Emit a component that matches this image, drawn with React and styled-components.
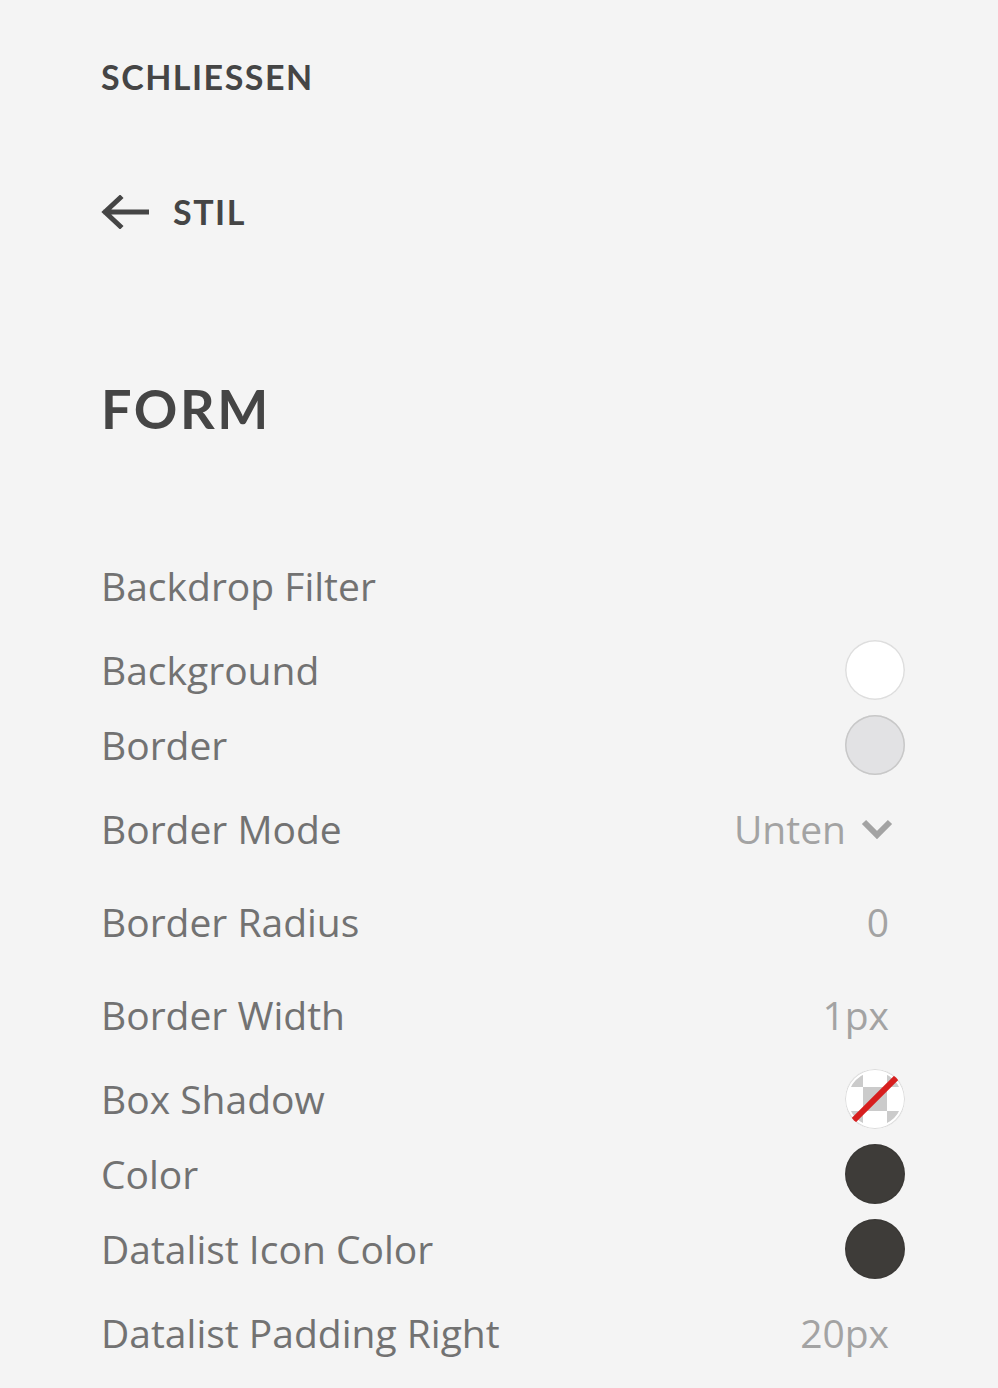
import React from "react";
import styled, { createGlobalStyle } from "styled-components";

const Global = createGlobalStyle`
  html, body { margin: 0; padding: 0; background: #f4f4f4; }
  body { font-family: "Open Sans", "Liberation Sans", sans-serif; }
  * { box-sizing: border-box; }
`;

const Panel = styled.div`
  width: 998px;
  min-height: 1388px;
  padding: 57px 93px 0 101px;
  display: flex;
  flex-direction: column;
`;

const HeadLink = styled.div`
  font-family: "Lato", "Open Sans", sans-serif;
  font-weight: 700;
  font-size: 34px;
  line-height: 40px;
  letter-spacing: 1.5px;
  color: #454545;
  display: flex;
  align-items: center;
  gap: 24px;
`;

const BackRow = styled(HeadLink)`
  margin-top: 95px;
`;

const Title = styled.h1`
  margin: 147px 0 0;
  font-family: "Lato", "Open Sans", sans-serif;
  font-weight: 700;
  font-size: 54px;
  line-height: 60px;
  letter-spacing: 2.6px;
  color: #454545;
`;

const List = styled.div`
  margin-top: 100px;
  display: flex;
  flex-direction: column;
`;

const Row = styled.div`
  display: flex;
  align-items: center;
  justify-content: space-between;
  height: ${(p) => (p.$swatch ? 75 : 93)}px;
`;

const Label = styled.span`
  font-size: 39px;
  color: #727272;
  line-height: 1;
`;

const Value = styled.span`
  font-size: 39px;
  color: #a3a3a3;
  line-height: 1;
  padding-right: 16px;
  display: flex;
  align-items: center;
  gap: 15px;
`;

const SelectValue = styled(Value)`
  padding-right: 12px;
`;

const Swatch = styled.span`
  width: 60px;
  height: 60px;
  border-radius: 50%;
  background: ${(p) => p.$color};
  box-shadow: inset 0 0 0 1.5px ${(p) => p.$ring || "rgba(0,0,0,0.12)"};
`;

const NoneSwatch = styled.span`
  position: relative;
  width: 60px;
  height: 60px;
  border-radius: 50%;
  overflow: hidden;
  background-color: #fff;
  background-image: conic-gradient(#fff 25%, #cbcbcb 0 50%, #fff 0 75%, #cbcbcb 0);
  background-size: 48px 48px;
  background-position: -6px -6px;
  box-shadow: inset 0 0 0 1px #dcdcdc, inset 0 0 0 3px #fff;
  &::after {
    content: "";
    position: absolute;
    left: 50%;
    top: 50%;
    width: 62px;
    height: 6px;
    background: #d71f1f;
    transform: translate(-50%, -50%) rotate(-45deg);
  }
`;

const ArrowLeft = () => (
  <svg width="48" height="34" viewBox="0 0 48 34" fill="none">
    <path d="M46 17H5M19 3L4 17l15 14" stroke="#454545" strokeWidth="5" strokeLinecap="square" />
  </svg>
);

const Chevron = () => (
  <svg width="32" height="20" viewBox="0 0 32 20" fill="none">
    <path d="M3 3l13 13L29 3" stroke="#a3a3a3" strokeWidth="6" />
  </svg>
);

const rows = [
  { label: "Backdrop Filter" },
  { label: "Background", swatch: "#ffffff", ring: "#dedede" },
  { label: "Border", swatch: "#e2e2e4", ring: "#c8c8c8" },
  { label: "Border Mode", value: "Unten", select: true },
  { label: "Border Radius", value: "0" },
  { label: "Border Width", value: "1px" },
  { label: "Box Shadow", none: true },
  { label: "Color", swatch: "#3e3c39", ring: "rgba(0,0,0,0.05)" },
  { label: "Datalist Icon Color", swatch: "#3e3c39", ring: "rgba(0,0,0,0.05)" },
  { label: "Datalist Padding Right", value: "20px" },
];

export default function App() {
  return (
    <>
      <Global />
      <Panel>
        <HeadLink>SCHLIESSEN</HeadLink>
        <BackRow>
          <ArrowLeft />
          <span>STIL</span>
        </BackRow>
        <Title>FORM</Title>
        <List>
          {rows.map((r) => (
            <Row key={r.label} $swatch={!!(r.swatch || r.none)}>
              <Label>{r.label}</Label>
              {r.swatch && <Swatch $color={r.swatch} $ring={r.ring} />}
              {r.none && <NoneSwatch />}
              {r.value && !r.select && <Value>{r.value}</Value>}
              {r.select && (
                <SelectValue>
                  {r.value}
                  <Chevron />
                </SelectValue>
              )}
            </Row>
          ))}
        </List>
      </Panel>
    </>
  );
}
